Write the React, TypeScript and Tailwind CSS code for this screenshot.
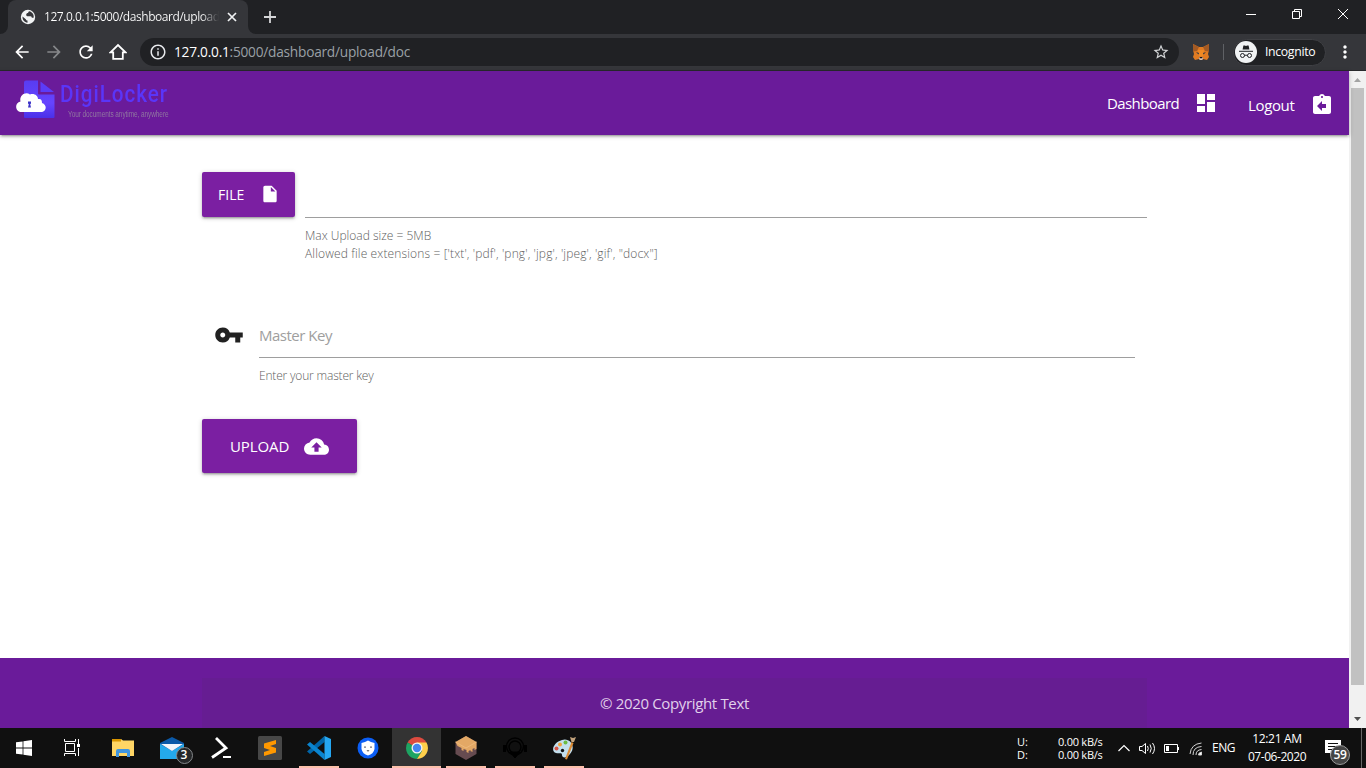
import React from "react";
import {
  MdArrowBack, MdArrowForward, MdRefresh, MdInfoOutline, MdStarBorder, MdMoreVert,
  MdDashboard, MdAssignmentReturn, MdInsertDriveFile, MdVpnKey, MdCloudUpload,
} from "react-icons/md";

function TabStrip() {
  return (
    <div className="flex h-[34px] shrink-0 bg-[#202124]">
      <div className="flex w-[8px] items-end bg-[#35363a]">
        <div className="h-full w-full rounded-br-[8px] bg-[#202124]" />
      </div>
      <div className="flex w-[240px] items-center rounded-t-[8px] bg-[#35363a] pl-[12px]">
        <svg className="size-[16px] shrink-0" viewBox="0 0 16 16">
          <circle cx="8" cy="8" r="7.200" fill="#f1f3f4" />
          <path d="M9.500 2.200c-1 .3-1.500 1-1.300 1.900-1.200 0-2 .5-2 1.600 0 1 .8 1.500 2 1.500h2.300c1 0 1.300.8 1.300 1.600h1.800c.6-2.500-.6-5.400-4.100-6.600zM2.500 7.500l3.300 2.800c.2 1 .8 1.200 1.700 1.300v2.100C4.500 13.300 2.300 11 2.500 7.500z" fill="#35363a" />
        </svg>
        <div className="ml-[8px] w-[175px] whitespace-nowrap bg-gradient-to-r from-white from-90% to-[#35363a] bg-clip-text text-[12px] tracking-[-0.45px] text-transparent">
          127.0.0.1:5000/dashboard/upload
        </div>
        <svg className="ml-[8px] size-[10px]" viewBox="0 0 10 10" stroke="#f1f3f4" strokeWidth="1.7"><path d="M1 1l8 8M9 1L1 9" /></svg>
      </div>
      <div className="w-[8px] bg-[#35363a]"><div className="h-full w-full rounded-bl-[8px] bg-[#202124]" /></div>
      <svg className="ml-[8px] mt-[11px] size-[12px]" viewBox="0 0 12 12" stroke="#d5d6d8" strokeWidth="1.8"><path d="M6 0v12M0 6h12" /></svg>
      <div className="ml-auto mr-[18px] mt-[9px] flex gap-[36px]">
        <svg className="size-[10px]" viewBox="0 0 10 10" stroke="#fff" fill="none"><path d="M0 5.5h10" /></svg>
        <svg className="size-[10px]" viewBox="0 0 10 10" stroke="#fff" fill="none"><path d="M.5 2.5h7v7h-7zM2.5 2.5v-2h7v7h-2" /></svg>
        <svg className="size-[10px]" viewBox="0 0 10 10" stroke="#fff" fill="none"><path d="M0 0l10 10M10 0L0 10" /></svg>
      </div>
    </div>
  );
}

function FoxIcon() {
  return (
    <svg className="ml-[14px] size-[16px]" viewBox="0 0 16 16">
      <path d="M0 0l6 3h4l6-3v6l-1 4 1 3-2 3-4-1-1 1H7l-1-1-4 1-2-3 1-3-1-4z" fill="#e07b22" />
      <path d="M0 0l6 3-2 4-4 .5zM16 0l-6 3 2 4 4 .5z" fill="#a35a24" />
      <path d="M5 6h6l-1 6H6z" fill="#f08a24" />
      <path d="M3 8l3 1-.5 1.500zM13 8l-3 1 .5 1.500z" fill="#25344a" />
      <path d="M6.500 13h3l.7 1.500L9 16H7l-1.200-1.500z" fill="#d7c1b3" />
      <path d="M6.800 13h2.400l.3 1.200h-3z" fill="#161616" />
    </svg>
  );
}

function Toolbar() {
  return (
    <div className="flex h-[37px] shrink-0 items-center border-b border-[#28292c] bg-[#35363a] pl-[12px]">
      <MdArrowBack className="size-[20px] text-white" />
      <MdArrowForward className="ml-[12px] size-[20px] text-[#86888a]" />
      <MdRefresh className="ml-[12px] size-[20px] text-white" />
      <svg className="ml-[13px] size-[18px]" viewBox="0 0 18 18" fill="none" stroke="#fff" strokeWidth="1.8"><path d="M1.500 9.300L9 2l7.500 7.300h-2.700v6.500H4.200V9.300z" /></svg>
      <div className="ml-[13px] flex h-[28px] w-[1039px] items-center rounded-full bg-[#202124] pl-[9px] pr-[9px]">
        <MdInfoOutline className="size-[18px] text-[#e8eaed]" />
        <div className="ml-[7px] whitespace-nowrap pt-px text-[13.700px] tracking-[-0.24px] text-[#9aa0a6]">
          <span className="text-white">127.0.0.1</span>:5000/dashboard/upload/doc
        </div>
        <MdStarBorder className="ml-auto size-[18px] text-[#d2d4d6]" />
      </div>
      <FoxIcon />
      <div className="ml-[14px] h-[16px] w-px bg-[#5f6165]" />
      <div className="ml-[9px] flex h-[27px] w-[93px] items-center rounded-full border border-[#3f4044] bg-[#202124] pl-px">
        <svg className="size-[22px] shrink-0" viewBox="0 0 22 22">
          <circle cx="11" cy="11" r="11" fill="#f1f3f4" />
          <path d="M7.600 8.600l.8-4.100h1.400l1.200.4 1.200-.4h1.400l.8 4.100z" fill="#202124" />
          <path d="M4 10.300h14M9.500 14.500q1.500-.8 3 0" stroke="#202124" fill="none" />
          <circle cx="7.500" cy="14.500" r="2" stroke="#202124" fill="none" />
          <circle cx="14.500" cy="14.500" r="2" stroke="#202124" fill="none" />
        </svg>
        <span className="ml-[8px] text-[12.300px] tracking-[-0.35px] text-white">Incognito</span>
      </div>
      <MdMoreVert className="ml-[9px] size-[20px] text-white" />
    </div>
  );
}

function Logo() {
  return (
    <div className="flex h-[40px]">
      <svg className="h-[40px] w-[42px]" viewBox="0 0 42 40">
        <defs>
          <linearGradient id="sheet" x1="0" y1="0" x2="0" y2="1">
            <stop offset="0" stopColor="#583cf2" /><stop offset=".6" stopColor="#6644ff" /><stop offset="1" stopColor="#4a30e8" />
          </linearGradient>
        </defs>
        <path d="M10 .5h12v13q0 1 1 1h15.500V37q0 1-1 1H9q-1 0-1-1V2.500q0-2 2-2z" fill="url(#sheet)" />
        <path d="M24.500 1.500L38 12H24.500z" fill="#5b3cf8" />
        <path d="M6 32c-7 0-8-9-1.500-10.500C3 16 9 11 14 14.500c4-1.500 8 1 8 4.500 3-.5 4 1 4 4 6 2 4 9-1 9z" fill="#fff" />
        <path d="M12 21.500h3v2l-.8.700.8 3.300h-3l.8-3.300-.8-.7z" fill="#3c32c8" />
      </svg>
      <div className="ml-[2px] w-[110px]">
        <div className="h-[28px] origin-left scale-x-[0.86] whitespace-nowrap pt-px font-['Roboto','Liberation_Sans',sans-serif] text-[24px] font-medium leading-[27px] tracking-[1.150px] text-[#5a35f8]">DigiLocker</div>
        <div className="ml-[8px] mt-[2px] origin-left scale-x-[0.76] whitespace-nowrap font-['Liberation_Sans',sans-serif] text-[8.500px] leading-[9px] tracking-[-0.08px] text-[#9077a0]">Your documents anytime, anywhere</div>
      </div>
    </div>
  );
}

function Page() {
  return (
    <div className="flex min-w-0 flex-1 flex-col bg-white">
      <nav className="z-10 flex h-[64px] shrink-0 bg-[#6a1b9a] pl-[16px] pr-[15px] text-[15px] tracking-[-0.6px] text-white shadow-[0_2px_2px_0_rgba(0,0,0,0.14),0_3px_1px_-2px_rgba(0,0,0,0.12),0_1px_5px_0_rgba(0,0,0,0.2)]">
        <div className="pt-[9px]"><Logo /></div>
        <div className="ml-auto flex h-[64px] items-center">
          <span className="w-[72px] whitespace-nowrap pt-px">Dashboard</span>
          <MdDashboard className="ml-[15px] size-[24px]" />
          <span className="ml-[30px] w-[48px] whitespace-nowrap pt-[5px] tracking-[-0.35px]">Logout</span>
          <MdAssignmentReturn className="ml-[14px] mt-[3px] size-[24px]" />
        </div>
      </nav>
      <main className="mx-auto w-[945px] flex-1 pt-[37px]">
        <div className="flex">
          <button className="flex h-[45px] w-[93px] items-center rounded-[2px] bg-[#7b1fa2] pl-[16px] text-[14px] text-white shadow-[0_2px_2px_0_rgba(0,0,0,0.14),0_3px_1px_-2px_rgba(0,0,0,0.12),0_1px_5px_0_rgba(0,0,0,0.2)]">
            <span className="w-[42px] text-left">FILE</span>
            <MdInsertDriveFile className="mb-px size-[20px]" />
          </button>
          <div className="ml-[10px] flex-1">
            <div className="h-[46px] border-b border-[#9e9e9e]" />
            <div className="whitespace-nowrap pt-[9px] text-[12px] leading-[18px] text-[#606060]">
              <div className="font-[350] tracking-[0px]">Max Upload size = 5MB</div>
              <div className="font-[350] tracking-[0.130px]">Allowed file extensions = ['txt', 'pdf', 'png', 'jpg', 'jpeg', 'gif', "docx"]</div>
            </div>
          </div>
        </div>
        <div className="mt-[49px] flex pl-[12px] pr-[12px]">
          <MdVpnKey className="mt-[8px] size-[30px] text-[#212121]" />
          <div className="ml-[15px] flex-1">
            <div className="h-[46px] border-b border-[#9e9e9e] text-[15px] leading-[47px] tracking-[-0.5px] text-[#9e9e9e]">Master Key</div>
            <div className="pt-[9px] text-[12px] font-[350] leading-[18px] tracking-[-0.18px] text-[#606060]">Enter your master key</div>
          </div>
        </div>
        <button className="mt-[34px] flex h-[54px] w-[155px] items-center rounded-[2px] bg-[#7b1fa2] pl-[28px] text-[15px] text-white shadow-[0_2px_2px_0_rgba(0,0,0,0.14),0_3px_1px_-2px_rgba(0,0,0,0.12),0_1px_5px_0_rgba(0,0,0,0.2)]">
          <span className="w-[74px] pt-px text-left tracking-[-0.1px]">UPLOAD</span>
          <MdCloudUpload className="size-[25px]" />
        </button>
      </main>
      <footer className="h-[70px] shrink-0 bg-[#6a1b9a] pt-[20px]">
        <div className="mx-auto h-[50px] w-[945px] bg-[#661d92] text-center text-[15px] leading-[51px] tracking-[-0.35px] text-[#e1d1eb]">© 2020 Copyright Text</div>
      </footer>
    </div>
  );
}

function Scrollbar() {
  return (
    <div className="flex w-[17px] shrink-0 flex-col items-center bg-[#f1f1f1]">
      <svg className="h-[17px] w-[17px]" viewBox="0 0 17 17"><path d="M5 11l3.500-4 3.500 4z" fill="#a3a3a3" /></svg>
      <div className="h-[597px] w-[13px] bg-[#c1c1c1]" />
      <svg className="mt-auto h-[17px] w-[17px]" viewBox="0 0 17 17"><path d="M5 6l3.500 4L12 6z" fill="#505050" /></svg>
    </div>
  );
}

function AppSlot({ children, open, active }: { children: React.ReactNode; open?: boolean; active?: boolean }) {
  return (
    <div className={`flex w-[49px] flex-col items-center ${active ? "bg-[#333333]" : ""}`}>
      <div className="flex h-[38px] items-center pt-px">{children}</div>
      {open && <div className={`h-[2px] bg-[#fcc0ab] ${active ? "w-full" : "w-[40px]"}`} />}
    </div>
  );
}

function Taskbar() {
  return (
    <div className="flex h-[40px] shrink-0 bg-[#101010] text-white">
      <AppSlot>
        <svg className="mr-px size-[16px]" viewBox="0 0 16 16" fill="#fff"><path d="M0 2.300l6.600-.9v6.100H0zM7.400 1.300L16 0v7.500H7.400zM0 8.400h6.600v6.200L0 13.700zM7.400 8.400H16V16l-8.600-1.200z" /></svg>
      </AppSlot>
      <AppSlot>
        <svg className="mr-[4px] size-[18px]" viewBox="0 0 18 18" stroke="#fff" fill="none"><path d="M2.500 4.500h9v8h-9zM1.500 0v2.500h11V0M1.500 17v-2.500h11V17M15.500 0v5M15.500 9v8" /><path d="M14 5h3v3h-3z" fill="#fff" stroke="none" /></svg>
      </AppSlot>
      <AppSlot>
        <svg className="size-[22px]" viewBox="0 0 22 22"><path d="M0 2h9l2 1.500h11V19H0z" fill="#ffd565" /><path d="M0 2h9v2.500H0z" fill="#d99500" /><path d="M4 20v-6q0-2 2-2h10q2 0 2 2v6h-3v-4H7v4z" fill="#4095df" /></svg>
      </AppSlot>
      <AppSlot>
        <div className="relative">
          <svg className="size-[24px]" viewBox="0 0 24 24"><path d="M0 7l12-6 12 6v16H0z" fill="#0b59a8" /><path d="M0 8l12 7 12-7v15H0z" fill="#24a9eb" /><path d="M1 8h22l-11 7z" fill="#f3f6fb" /></svg>
          <div className="absolute left-[16px] top-[11px] flex size-[17px] items-center justify-center rounded-full border border-[#85888b] bg-[#252729] text-[12px] font-semibold">3</div>
        </div>
      </AppSlot>
      <AppSlot>
        <svg className="size-[22px]" viewBox="0 0 22 22" fill="none" stroke="#fff" strokeWidth="2.800"><path d="M6 1l10 10L2 20.500" /><path d="M13 20h8" strokeWidth="2" /></svg>
      </AppSlot>
      <AppSlot>
        <svg className="size-[24px]" viewBox="0 0 24 24"><rect width="24" height="24" rx="1.500" fill="#474747" /><path d="M6 7.500L18 4v4l-6 2 6 2v4.500L6 20v-4l6-2-6-2z" fill="#ff9800" /></svg>
      </AppSlot>
      <AppSlot open>
        <svg className="size-[24px]" viewBox="0 0 24 24"><path d="M17.500 0v6L3 18 0 15.500z" fill="#0065a9" /><path d="M3 6l14.500 12v6L0 8.500z" fill="#0a84cf" /><path d="M17.500 0L24 3v18l-6.500 3z" fill="#25a7f2" /></svg>
      </AppSlot>
      <AppSlot>
        <svg className="size-[22px]" viewBox="0 0 22 22"><circle cx="11" cy="11" r="10.500" fill="#0b5ef5" /><path d="M4.500 6L8 5l3-1.500L14 5l3.500 1v6q-1 5-6.500 6.500Q5.500 17 4.500 12z" fill="#fff" /><path d="M7 9.500h2v1.200H7zM13 9.500h2v1.200h-2zM9.500 13h3L11 15z" fill="#75757d" /></svg>
      </AppSlot>
      <AppSlot open active>
        <svg className="size-[22px]" viewBox="0 0 22 22"><path d="M11 11L1.500 5.500A11 11 0 0 1 20.500 5.500z" fill="#dd4b40" /><path d="M11 11L1.500 5.500A11 11 0 0 0 11 22l5-8z" fill="#1da462" /><path d="M11 5.500h9.500A11 11 0 0 1 11 22l5-8z" fill="#ffd04b" /><circle cx="11" cy="11" r="5.500" fill="#f4f4f4" /><circle cx="11" cy="11" r="4.200" fill="#4586f3" /></svg>
      </AppSlot>
      <AppSlot open>
        <svg className="size-[24px]" viewBox="0 0 24 24"><path d="M1.500 6L12 0l10.500 6v12L12 24 1.500 18z" fill="#664b50" /><path d="M1.500 6L12 0l10.500 6v7l-2 1v-2l-2 1v3l-2-1v-1l-2 1v2l-2-1v-2l-3-1v2l-2-1v-2l-4-2z" fill="#e3a865" /><path d="M1.500 6L12 12l10.500-6" fill="none" stroke="#f0bd80" strokeWidth=".8" /></svg>
      </AppSlot>
      <AppSlot open>
        <svg className="size-[24px]" viewBox="0 0 24 24" fill="none" stroke="#000"><circle cx="12" cy="10.500" r="8.500" strokeWidth="1.500" /><circle cx="12" cy="11" r="6" strokeWidth="1.500" /><path d="M1.500 9v7M22.500 9v7" strokeWidth="3" /><path d="M7 16h10l-5 6z" fill="#000" /></svg>
      </AppSlot>
      <AppSlot open>
        <svg className="size-[24px]" viewBox="0 0 24 24"><path d="M10 4C17 1 25 10 18 18c-4 5-8 4-8 1 0-3-3-1-6-2-6-2-2-11 6-13z" fill="#c3dfed" /><circle cx="4.500" cy="12.500" r="2" fill="#d95445" /><circle cx="8" cy="8.500" r="2" fill="#f0a13c" /><circle cx="13.500" cy="6.500" r="2" fill="#6bbd41" /><circle cx="10.500" cy="14.500" r="1.700" fill="#101010" /><path d="M13 23l2 .5L21.500 7l-2-1z" fill="#dc8c36" /><path d="M19.500 6L18 1l3 1 3-1-2 5z" fill="#c3a37d" /></svg>
      </AppSlot>
      <div className="ml-auto flex">
        <div className="w-[41px] pt-[7px] text-[11px] leading-[13px]"><div>U:</div><div>D:</div></div>
        <div className="w-[60px] whitespace-nowrap pt-[7px] text-[11px] leading-[13px] tracking-[-0.250px]"><div>0.00 kB/s</div><div>0.00 kB/s</div></div>
        <svg className="mt-[16px] h-[8px] w-[12px]" viewBox="0 0 12 8" fill="none" stroke="#fff" strokeWidth="1.200"><path d="M.5 7L6 1.500 11.500 7" /></svg>
        <svg className="ml-[9px] mt-[12px] size-[17px]" viewBox="0 0 17 17" fill="none" stroke="#fff"><path d="M.5 6.500H3l3.500-3v10L3 10.500H.5zM8.500 6q1.500 2.500 0 5M11 4.500q2.500 4 0 8M13.500 3q4 5.500 0 11" /></svg>
        <svg className="ml-[8px] mt-[12px] h-[17px] w-[15px]" viewBox="0 0 15 17" fill="none" stroke="#fff"><path d="M.5 4.500h13v8H.5zM14.500 7v3" /><path d="M2 6h3v5H2z" fill="#fff" stroke="none" /></svg>
        <svg className="ml-[10px] mt-[14px] size-[14px]" viewBox="0 0 14 14" fill="none" stroke="#d5d5d5"><path d="M1 12Q2 2 12.500 1M4 13q0-8 8.500-8.500M7 13q0-5 5.500-5.500" /><path d="M9.500 13q0-2.500 3-3v3z" fill="#fff" /></svg>
        <div className="ml-[9px] w-[32px] pt-[11px] text-[12px] leading-[18px] tracking-[-0.5px]">ENG</div>
        <div className="w-[66px] whitespace-nowrap pt-[2px] text-center text-[12px] leading-[18px] tracking-[-0.45px]"><div className="tracking-[-0.3px]">12:21 AM</div><div>07-06-2020</div></div>
        <div className="relative ml-[14px] mt-[11px] w-[37px]">
          <svg className="size-[18px]" viewBox="0 0 18 18"><path d="M1 1h16v13h-8l-3 3v-3H1z" fill="#fff" /><path d="M4 4.500h10M4 7.500h10M4 10.500h7" stroke="#101010" /></svg>
          <div className="absolute left-[6px] top-[6px] flex size-[20px] items-center justify-center rounded-full border border-[#9a9a9a] bg-[#454545] text-[12px] font-semibold tracking-[-0.3px]">59</div>
        </div>
        <div className="h-full w-px bg-[#666]" />
        <div className="w-[4px]" />
      </div>
    </div>
  );
}

export default function App() {
  return (
    <div className="flex h-[768px] w-[1366px] flex-col overflow-hidden font-['Open_Sans','Noto_Sans',sans-serif]">
      <TabStrip />
      <Toolbar />
      <div className="flex min-h-0 flex-1"><Page /><Scrollbar /></div>
      <Taskbar />
    </div>
  );
}
